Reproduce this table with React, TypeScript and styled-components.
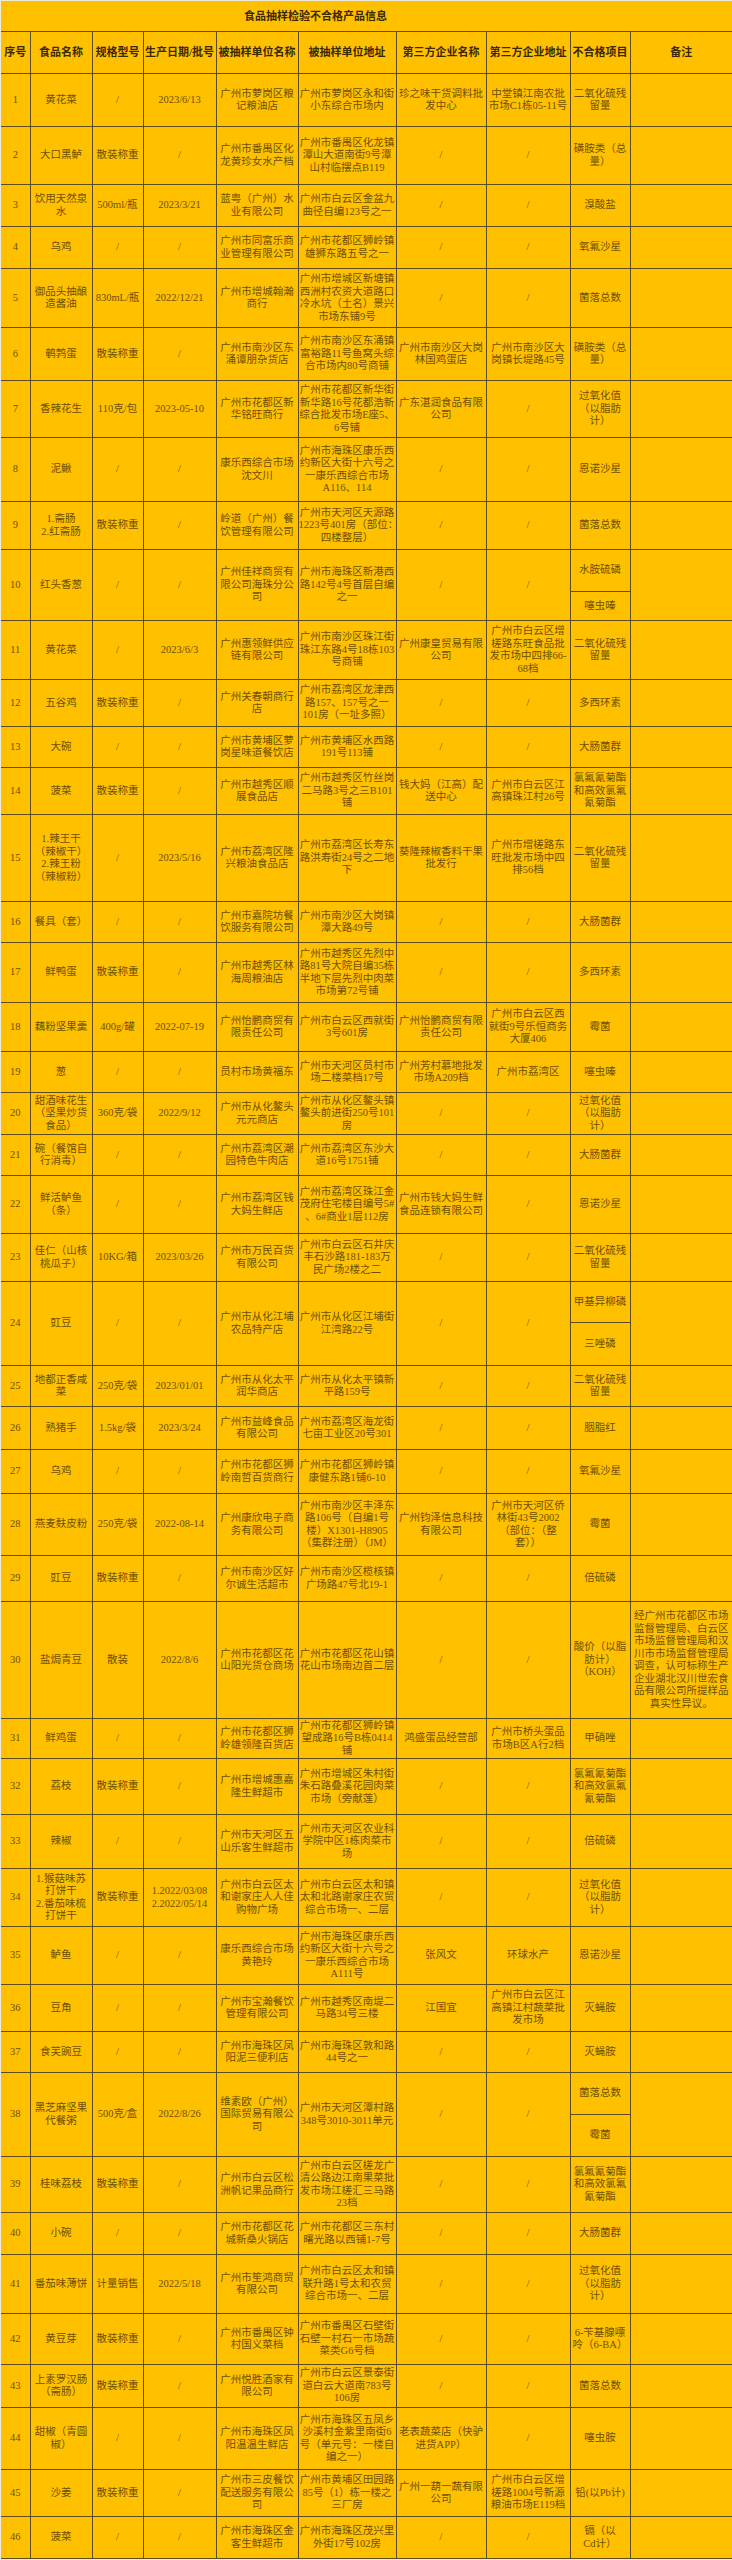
import React from "react";
import styled, { createGlobalStyle } from "styled-components";

const GlobalStyle = createGlobalStyle`
  body {
    margin: 0;
    background: #efe9da;
  }
`;

const Page = styled.div`
  width: 732px;
  padding: 1px 0 3px 1px;
  box-sizing: border-box;
`;

const Sheet = styled.table`
  width: 731px;
  table-layout: fixed;
  border-collapse: collapse;
  border-style: hidden hidden solid hidden;
  border-width: 1px;
  border-color: #5e4b22;
  background: #ffc000;
  font-family: "Liberation Serif", "Noto Sans CJK SC", serif;
`;

const Col = styled.col<{ $w: number }>`
  width: ${(p) => p.$w}px;
`;

const TitleCell = styled.td`
  height: 30px;
  padding: 0 102px 0 0;
  text-align: center;
  vertical-align: middle;
  font-size: 11px;
  line-height: 13px;
  font-weight: 700;
  color: #3a2800;
  border-bottom: 1px solid #5e4b22;
`;

const HeadCell = styled.th`
  height: 41px;
  padding: 0;
  border: 1px solid #5e4b22;
  text-align: center;
  vertical-align: middle;
  font-size: 11px;
  line-height: 13px;
  font-weight: 700;
  color: #3a2800;
  white-space: nowrap;
`;

const BodyRow = styled.tr<{ $h: number }>`
  height: ${(p) => p.$h}px;
`;

const Cell = styled.td`
  padding: 0;
  border: 1px solid #5e4b22;
  text-align: center;
  vertical-align: middle;
  font-size: 10.5px;
  line-height: 12.5px;
  color: #6e5004;
  white-space: pre;
`;

type Row = {
  no: number;
  h: number[];
  name: string;
  spec: string;
  date: string;
  unit: string;
  addr: string;
  tp: string;
  tpAddr: string;
  items: string[];
  note?: string;
};

const r = (
  no: number,
  h: number | number[],
  name: string,
  spec: string,
  date: string,
  unit: string,
  addr: string,
  tp: string,
  tpAddr: string,
  items: string | string[],
  note?: string
): Row => ({
  no,
  h: Array.isArray(h) ? h : [h],
  name,
  spec,
  date,
  unit,
  addr,
  tp,
  tpAddr,
  items: Array.isArray(items) ? items : [items],
  note,
});

const widths = [29, 62, 51, 73, 82, 98, 90, 84, 60, 102];

const headers = [
  "序号",
  "食品名称",
  "规格型号",
  "生产日期/批号",
  "被抽样单位名称",
  "被抽样单位地址",
  "第三方企业名称",
  "第三方企业地址",
  "不合格项目",
  "备注",
];

const rows: Row[] = [
  r(1, 53, "黄花菜", "/", "2023/6/13", "广州市萝岗区粮\n记粮油店", "广州市萝岗区永和街\n小东综合市场内", "珍之味干货调料批\n发中心", "中堂镇江南农批\n市场C1栋05-11号", "二氧化硫残\n留量"),
  r(2, 58, "大口黑鲈", "散装称重", "/", "广州市番禺区化\n龙黄珍女水产档", "广州市番禺区化龙镇\n潭山大道南街9号潭\n山村临摆点B119", "/", "/", "磺胺类（总\n量）"),
  r(3, 42, "饮用天然泉\n水", "500ml/瓶", "2023/3/21", "蓝粤（广州）水\n业有限公司", "广州市白云区金盆九\n曲径自编123号之一", "/", "/", "溴酸盐"),
  r(4, 42, "乌鸡", "/", "/", "广州市同富乐商\n业管理有限公司", "广州市花都区狮岭镇\n雄狮东路五号之一", "/", "/", "氧氟沙星"),
  r(5, 59, "御品头抽酿\n造酱油", "830mL/瓶", "2022/12/21", "广州市增城翰瀚\n商行", "广州市增城区新塘镇\n西洲村农资大道路口\n冷水坑（土名）景兴\n市场东铺9号", "/", "/", "菌落总数"),
  r(6, 53, "鹌鹑蛋", "散装称重", "/", "广州市南沙区东\n涌谭朋杂货店", "广州市南沙区东涌镇\n富裕路11号鱼窝头综\n合市场内80号商铺", "广州市南沙区大岗\n林国鸡蛋店", "广州市南沙区大\n岗镇长堤路45号", "磺胺类（总\n量）"),
  r(7, 57, "香辣花生", "110克/包", "2023-05-10", "广州市花都区新\n华铭旺商行", "广州市花都区新华街\n新华路16号花都浩新\n综合批发市场E座5、\n6号铺", "广东湛润食品有限\n公司", "/", "过氧化值\n（以脂肪\n计）"),
  r(8, 64, "泥鳅", "/", "/", "康乐西综合市场\n沈文川", "广州市海珠区康乐西\n约新区大街十六号之\n一康乐西综合市场\nA116、114", "/", "/", "恩诺沙星"),
  r(9, 48, "1.斋肠\n2.红斋肠", "散装称重", "/", "岭道（广州）餐\n饮管理有限公司", "广州市天河区天源路\n1223号401房（部位：\n四楼整层）", "/", "/", "菌落总数"),
  r(10, [42, 29], "红头香葱", "/", "/", "广州佳祥商贸有\n限公司海珠分公\n司", "广州市海珠区新港西\n路142号4号首层自编\n之一", "/", "/", ["水胺硫磷", "噻虫嗪"]),
  r(11, 59, "黄花菜", "/", "2023/6/3", "广州惠领鲜供应\n链有限公司", "广州市南沙区珠江街\n珠江东路4号18栋103\n号商铺", "广州康皇贸易有限\n公司", "广州市白云区增\n槎路东旺食品批\n发市场中四排66-\n68档", "二氧化硫残\n留量"),
  r(12, 47, "五谷鸡", "散装称重", "/", "广州关春朝商行\n店", "广州市荔湾区龙津西\n路157、157号之一\n101房（一址多照）", "/", "/", "多西环素"),
  r(13, 41, "大碗", "/", "/", "广州市黄埔区萝\n岗星味道餐饮店", "广州市黄埔区水西路\n191号113铺", "/", "/", "大肠菌群"),
  r(14, 47, "菠菜", "散装称重", "/", "广州市越秀区顺\n展食品店", "广州市越秀区竹丝岗\n二马路3号之三B101\n铺", "钱大妈（江高）配\n送中心", "广州市白云区江\n高镇珠江村26号", "氯氟氰菊酯\n和高效氯氟\n氰菊酯"),
  r(15, 87, "1.辣王干\n（辣椒干）\n2.辣王粉\n（辣椒粉）", "/", "2023/5/16", "广州市荔湾区隆\n兴粮油食品店", "广州市荔湾区长寿东\n路洪寿街24号之二地\n下", "葵隆辣椒香料干果\n批发行", "广州市增槎路东\n旺批发市场中四\n排56档", "二氧化硫残\n留量"),
  r(16, 41, "餐具（套）", "/", "/", "广州市嘉院坊餐\n饮服务有限公司", "广州市南沙区大岗镇\n潭大路49号", "/", "/", "大肠菌群"),
  r(17, 60, "鲜鸭蛋", "散装称重", "/", "广州市越秀区林\n海周粮油店", "广州市越秀区先烈中\n路81号大院自编35栋\n半地下层先烈中肉菜\n市场第72号铺", "/", "/", "多西环素"),
  r(18, 49, "藕粉坚果羹", "400g/罐", "2022-07-19", "广州怡鹏商贸有\n限责任公司", "广州市白云区西就街\n3号601房", "广州怡鹏商贸有限\n责任公司", "广州市白云区西\n就街9号乐恒商务\n大厦406", "霉菌"),
  r(19, 41, "葱", "/", "/", "员村市场黄福东", "广州市天河区员村市\n场二楼菜档17号", "广州芳村慕地批发\n市场A209档", "广州市荔湾区", "噻虫嗪"),
  r(20, 42, "甜酒味花生\n（坚果炒货\n食品）", "360克/袋", "2022/9/12", "广州市从化鳌头\n元元商店", "广州市从化区鳌头镇\n鳌头前进街250号101\n房", "/", "/", "过氧化值\n（以脂肪\n计）"),
  r(21, 41, "碗（餐馆自\n行消毒）", "/", "/", "广州市荔湾区潮\n园特色牛肉店", "广州市荔湾区东沙大\n道16号1751铺", "/", "/", "大肠菌群"),
  r(22, 58, "鲜活鲈鱼\n（条）", "/", "/", "广州市荔湾区钱\n大妈生鲜店", "广州市荔湾区珠江金\n茂府住宅楼自编号5#\n、6#商业1层112房", "广州市钱大妈生鲜\n食品连锁有限公司", "/", "恩诺沙星"),
  r(23, 48, "佳仁（山核\n桃瓜子）", "10KG/箱", "2023/03/26", "广州市万民百货\n有限公司", "广州市白云区石井庆\n丰石沙路181-183万\n民广场2楼之二", "/", "/", "二氧化硫残\n留量"),
  r(24, [41, 43], "豇豆", "/", "/", "广州市从化江埔\n农品特产店", "广州市从化区江埔街\n江湾路22号", "/", "/", ["甲基异柳磷", "三唑磷"]),
  r(25, 41, "地都正香咸\n菜", "250克/袋", "2023/01/01", "广州市从化太平\n润华商店", "广州市从化太平镇新\n平路159号", "/", "/", "二氧化硫残\n留量"),
  r(26, 43, "熟猪手", "1.5kg/袋", "2023/3/24", "广州市益峰食品\n有限公司", "广州市荔湾区海龙街\n七亩工业区20号301", "/", "/", "胭脂红"),
  r(27, 44, "乌鸡", "/", "/", "广州市花都区狮\n岭南哲百货商行", "广州市花都区狮岭镇\n康健东路1铺6-10", "/", "/", "氧氟沙星"),
  r(28, 62, "燕麦麸皮粉", "250克/袋", "2022-08-14", "广州康欣电子商\n务有限公司", "广州市南沙区丰泽东\n路106号（自编1号\n楼）X1301-H8905\n（集群注册）（JM）", "广州钧泽信息科技\n有限公司", "广州市天河区侨\n林街43号2002\n（部位：（整\n套））", "霉菌"),
  r(29, 46, "豇豆", "散装称重", "/", "广州市南沙区好\n尔诚生活超市", "广州市南沙区榄核镇\n广场路47号北19-1", "/", "/", "倍硫磷"),
  r(30, 117, "盐焗青豆", "散装", "2022/8/6", "广州市花都区花\n山阳光货仓商场", "广州市花都区花山镇\n花山市场南边首二层", "/", "/", "酸价（以脂\n肪计）\n（KOH）", "经广州市花都区市场\n监督管理局、白云区\n市场监督管理局和汉\n川市市场监督管理局\n调查，认可标称生产\n企业湖北汉川世宏食\n品有限公司所提样品\n真实性异议。"),
  r(31, 40, "鲜鸡蛋", "/", "/", "广州市花都区狮\n岭雄领隆百货店", "广州市花都区狮岭镇\n望成路16号B栋0414\n铺", "鸿盛蛋品经营部", "广州市桥头蛋品\n市场B区A行2档", "甲硝唑"),
  r(32, 56, "荔枝", "散装称重", "/", "广州市增城惠嘉\n隆生鲜超市", "广州市增城区朱村街\n朱石路叠溪花园肉菜\n市场（旁献莲）", "/", "/", "氯氟氰菊酯\n和高效氯氟\n氰菊酯"),
  r(33, 54, "辣椒", "/", "/", "广州市天河区五\n山乐客生鲜超市", "广州市天河区农业科\n学院中区1栋肉菜市\n场", "/", "/", "倍硫磷"),
  r(34, 58, "1.猴菇味苏\n打饼干\n2.番茄味梳\n打饼干", "散装称重", "1.2022/03/08\n2.2022/05/14", "广州市白云区太\n和谢家庄人人佳\n购物广场", "广州市白云区太和镇\n太和北路谢家庄农贸\n综合市场一、二层", "/", "/", "过氧化值\n（以脂肪\n计）"),
  r(35, 58, "鲈鱼", "/", "/", "康乐西综合市场\n黄艳玲", "广州市海珠区康乐西\n约新区大街十六号之\n一康乐西综合市场\nA111号", "张风文", "环球水产", "恩诺沙星"),
  r(36, 47, "豆角", "/", "/", "广州市宝瀚餐饮\n管理有限公司", "广州市越秀区南堤二\n马路34号三楼", "江国宜", "广州市白云区江\n高镇江村蔬菜批\n发市场", "灭蝇胺"),
  r(37, 41, "食芙豌豆", "/", "/", "广州市海珠区凤\n阳泥三便利店", "广州市海珠区敦和路\n44号之一", "/", "/", "灭蝇胺"),
  r(38, [42, 42], "黑芝麻坚果\n代餐粥", "500克/盒", "2022/8/26", "维素欧（广州）\n国际贸易有限公\n司", "广州市天河区潭村路\n348号3010-3011单元", "/", "/", ["菌落总数", "霉菌"]),
  r(39, 56, "桂味荔枝", "散装称重", "/", "广州市白云区松\n洲帆记果品商行", "广州市白云区槎龙广\n清公路边江南果菜批\n发市场江槎汇三马路\n23档", "/", "/", "氯氟氰菊酯\n和高效氯氟\n氰菊酯"),
  r(40, 42, "小碗", "/", "/", "广州市花都区花\n城新桑火锅店", "广州市花都区三东村\n曙光路以西铺1-7号", "/", "/", "大肠菌群"),
  r(41, 59, "番茄味薄饼", "计量销售", "2022/5/18", "广州市笙鸿商贸\n有限公司", "广州市白云区太和镇\n联升路1号太和农贸\n综合市场一、二层", "/", "/", "过氧化值\n（以脂肪\n计）"),
  r(42, 51, "黄豆芽", "散装称重", "/", "广州市番禺区钟\n村国义菜档", "广州市番禺区石壁街\n石壁一村石一市场蔬\n菜类G6号档", "/", "/", "6-苄基腺嘌\n呤（6-BA）"),
  r(43, 43, "上素罗汉肠\n（斋肠）", "散装称重", "/", "广州悦胜酒家有\n限公司", "广州市白云区景泰街\n道白云大道南783号\n106房", "/", "/", "菌落总数"),
  r(44, 62, "甜椒（青圆\n椒）", "/", "/", "广州市海珠区凤\n阳温温生鲜店", "广州市海珠区五凤乡\n沙溪村金紫里南街6\n号（单元号：一楼自\n编之一）", "老表蔬菜店（快驴\n进货APP）", "/", "噻虫胺"),
  r(45, 47, "沙姜", "散装称重", "/", "广州市三皮餐饮\n配送服务有限公\n司", "广州市黄埔区田园路\n85号（1）栋一楼之\n三厂房", "广州一葫一蔬有限\n公司", "广州市白云区增\n槎路1004号新源\n粮油市场E119档", "铅(以Pb计)"),
  r(46, 42, "菠菜", "/", "/", "广州市海珠区金\n客生鲜超市", "广州市海珠区茂兴里\n外街17号102房", "/", "/", "镉（以\nCd计）"),
];

const RecordRows = ({ row }: { row: Row }) => {
  const span = row.items.length;
  return (
    <>
      <BodyRow $h={row.h[0]}>
        <Cell rowSpan={span}>{row.no}</Cell>
        <Cell rowSpan={span}>{row.name}</Cell>
        <Cell rowSpan={span}>{row.spec}</Cell>
        <Cell rowSpan={span}>{row.date}</Cell>
        <Cell rowSpan={span}>{row.unit}</Cell>
        <Cell rowSpan={span}>{row.addr}</Cell>
        <Cell rowSpan={span}>{row.tp}</Cell>
        <Cell rowSpan={span}>{row.tpAddr}</Cell>
        <Cell>{row.items[0]}</Cell>
        <Cell rowSpan={span}>{row.note ?? ""}</Cell>
      </BodyRow>
      {row.items.slice(1).map((item, i) => (
        <BodyRow key={item} $h={row.h[i + 1]}>
          <Cell>{item}</Cell>
        </BodyRow>
      ))}
    </>
  );
};

export default function App() {
  return (
    <Page>
      <GlobalStyle />
      <Sheet>
        <colgroup>
          {widths.map((w, i) => (
            <Col key={i} $w={w} />
          ))}
        </colgroup>
        <tbody>
          <tr>
            <TitleCell colSpan={10}>食品抽样检验不合格产品信息</TitleCell>
          </tr>
          <tr>
            {headers.map((h) => (
              <HeadCell key={h}>{h}</HeadCell>
            ))}
          </tr>
          {rows.map((row) => (
            <RecordRows key={row.no} row={row} />
          ))}
        </tbody>
      </Sheet>
    </Page>
  );
}
